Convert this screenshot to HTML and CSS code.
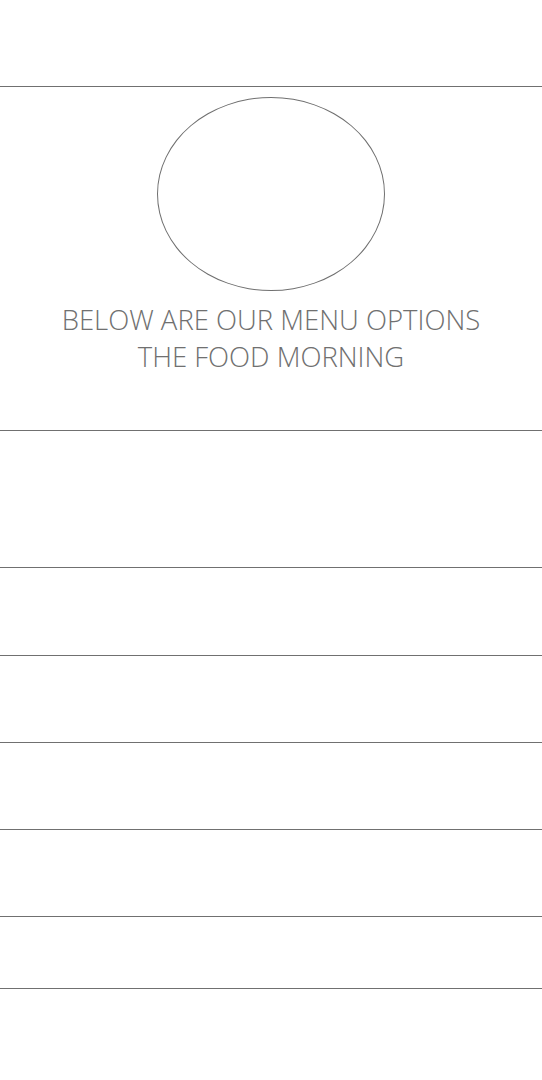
FILE: index.html
```html
<!DOCTYPE html>
<html lang="en">
<head>
<meta charset="utf-8">
<title>Menu</title>
<link rel="stylesheet" href="styles.css">
</head>
<body>
<header class="band band-top"></header>
<section class="band band-hero">
  <div class="logo"></div>
  <h1 class="title">BELOW ARE OUR MENU OPTIONS<br>THE FOOD MORNING</h1>
</section>
<section class="band band-tall"></section>
<section class="band band-row"></section>
<section class="band band-row2"></section>
<section class="band band-row2"></section>
<section class="band band-row2"></section>
<section class="band band-last"></section>
</body>
</html>
```
FILE: styles.css
```css
html, body {
  margin: 0;
  padding: 0;
  background: #ffffff;
}
body {
  font-family: "Open Sans", "Liberation Sans", sans-serif;
  width: 542px;
}
.band {
  box-sizing: content-box;
  border-bottom: 1px solid #707070;
}
.band-top { height: 86px; }
.band-hero {
  height: 343px;
  display: flex;
  flex-direction: column;
  align-items: center;
  padding: 0;
}
.logo {
  box-sizing: border-box;
  margin-top: 10px;
  width: 228px;
  height: 194px;
  border: 1px solid #707070;
  border-radius: 50%;
}
.title {
  margin: 10px 0 0;
  font-weight: 350;
  font-size: 27.5px;
  line-height: 37px;
  color: #707070;
  text-align: center;
  white-space: nowrap;
}
.band-tall { height: 136px; }
.band-row { height: 87px; }
.band-row2 { height: 86px; }
.band-last { height: 71px; }
```
